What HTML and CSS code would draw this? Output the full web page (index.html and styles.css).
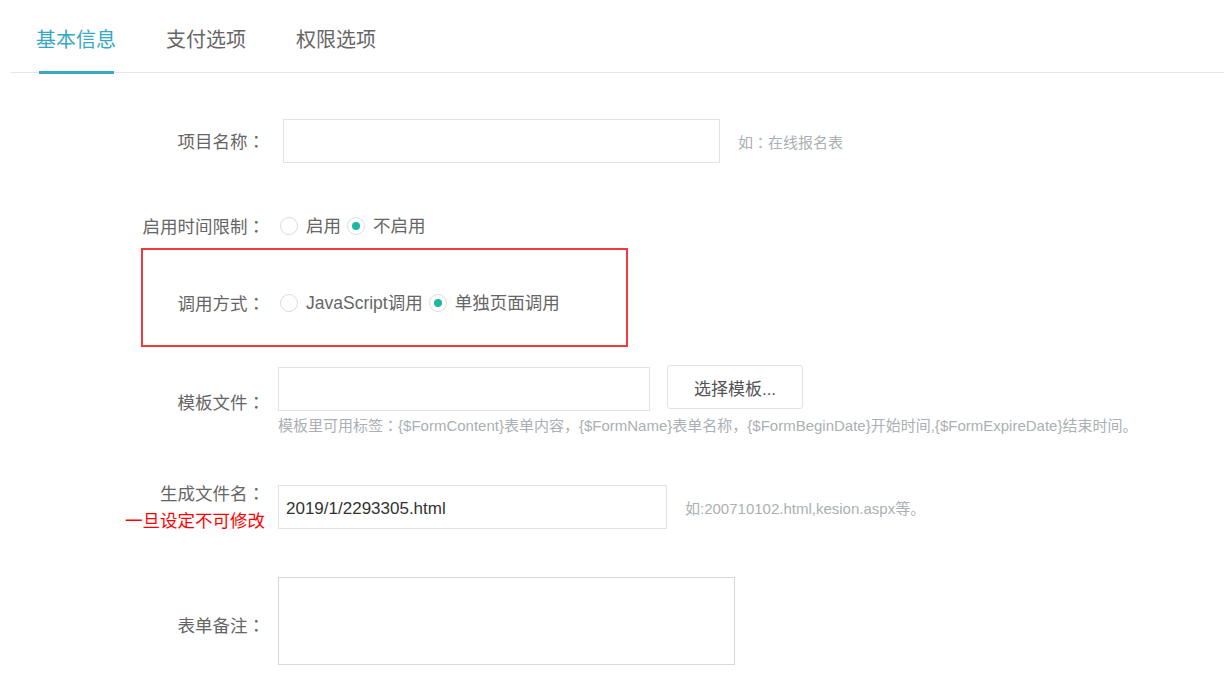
FILE: index.html
```html
<!DOCTYPE html>
<html lang="zh-CN">
<head>
<meta charset="utf-8">
<title>基本信息</title>
<link rel="stylesheet" href="styles.css">
</head>
<body>
<div class="tabs">
  <div class="tab active">基本信息</div>
  <div class="tab">支付选项</div>
  <div class="tab">权限选项</div>
</div>
<div class="form">
  <div class="row row-name">
    <div class="label">项目名称<span class="colon" lang="zh-TW">：</span></div>
    <input class="input input-name" type="text">
    <span class="hint">如<span class="colon" lang="zh-TW">：</span>在线报名表</span>
  </div>

  <div class="row row-time">
    <div class="label">启用时间限制<span class="colon" lang="zh-TW">：</span></div>
    <div class="radios">
      <span class="radio"></span><span class="rtext">启用</span>
      <span class="radio checked"></span><span class="rtext">不启用</span>
    </div>
  </div>

  <div class="highlight">
    <div class="row row-mode">
      <div class="label label-mode">调用方式<span class="colon" lang="zh-TW">：</span></div>
      <div class="radios">
        <span class="radio"></span><span class="rtext">JavaScript调用</span>
        <span class="radio checked"></span><span class="rtext">单独页面调用</span>
      </div>
    </div>
  </div>

  <div class="row row-tpl">
    <div class="label label-tpl">模板文件<span class="colon" lang="zh-TW">：</span></div>
    <div class="field">
      <div class="field-line">
        <input class="input input-tpl" type="text">
        <button class="btn" type="button">选择模板...</button>
      </div>
      <div class="tip">模板里可用标签<span class="colon" lang="zh-TW">：</span>{$FormContent}表单内容，{$FormName}表单名称，{$FormBeginDate}开始时间,{$FormExpireDate}结束时间。</div>
    </div>
  </div>

  <div class="row row-file">
    <div class="label label-file">生成文件名<span class="colon" lang="zh-TW">：</span><br><span class="warn">一旦设定不可修改</span></div>
    <input class="input input-file" type="text" value="2019/1/2293305.html">
    <span class="hint hint-file">如:200710102.html,kesion.aspx等。</span>
  </div>

  <div class="row row-note">
    <div class="label label-note">表单备注<span class="colon" lang="zh-TW">：</span></div>
    <textarea class="textarea"></textarea>
  </div>
</div>
</body>
</html>
```

FILE: styles.css
```css
* { box-sizing: border-box; }

body {
  margin: 0;
  background: #fff;
  font-family: "Liberation Sans", "Noto Sans CJK SC", sans-serif;
  color: #666;
}

.colon {
  font-family: "Noto Sans CJK TC", "Noto Sans CJK SC", sans-serif;
}

.tabs {
  margin-left: 11px;
  height: 73px;
  border-bottom: 1px solid #e1e7e7;
  display: flex;
  padding-left: 25px;
  gap: 50px;
}

.tab {
  position: relative;
  height: 72px;
  display: flex;
  align-items: center;
  padding-top: 4px;
  font-size: 20px;
  color: #666;
}

.tab.active { color: #38a8c2; }

.tab.active::after {
  content: "";
  position: absolute;
  left: 3px;
  right: 2px;
  bottom: -2px;
  height: 3px;
  background: #38a8c2;
}

.form {
  padding-top: 46px;
}

.row {
  display: flex;
  align-items: center;
}

.label {
  width: 265px;
  flex-shrink: 0;
  text-align: right;
  font-size: 17.5px;
  line-height: 27px;
  color: #666;
}

.input {
  height: 44px;
  border: 1px solid #dfe3e3;
  background: #fff;
  font-family: "Liberation Sans", "Noto Sans CJK SC", sans-serif;
  font-size: 17px;
  color: #333;
  padding: 0 7px 0 7px;
  outline: none;
}

.input-name {
  margin-left: 18px;
  width: 437px;
}

.hint {
  margin-left: 18px;
  font-size: 15px;
  color: #aab0b3;
}

.row-time {
  margin-top: 41px;
  height: 44px;
}

.radios {
  display: flex;
  align-items: center;
  margin-left: 15px;
  font-size: 17.5px;
  color: #666;
}

.radio {
  width: 18px;
  height: 18px;
  border: 1px solid #d9dede;
  border-radius: 50%;
  display: flex;
  align-items: center;
  justify-content: center;
  margin-left: 6px;
}

.radios .radio:first-child { margin-left: 0; }

.radio.checked::after {
  content: "";
  width: 8px;
  height: 8px;
  border-radius: 50%;
  background: #1db8a0;
}

.rtext {
  margin-left: 8px;
  margin-bottom: 4px;
}

.highlight {
  margin-left: 141px;
  width: 487px;
  height: 99px;
  border: 2px solid #f23a3a;
  padding-top: 31px;
}

.row-mode { height: 44px; }

.label-mode { width: 122px; }

.row-tpl {
  margin-top: 18px;
}

.label-tpl { padding-top: 4px; }

.field {
  margin-left: 13px;
  display: flex;
  flex-direction: column;
}

.field-line {
  display: flex;
  align-items: flex-start;
}

.input-tpl {
  margin-top: 2px;
  width: 372px;
}

.btn {
  margin-left: 17px;
  width: 136px;
  height: 44px;
  border: 1px solid #dfe3e3;
  border-radius: 3px;
  background: #fff;
  font-family: "Liberation Sans", "Noto Sans CJK SC", sans-serif;
  font-size: 17px;
  color: #555;
}

.tip {
  margin-top: 4px;
  font-size: 15px;
  line-height: 20px;
  color: #aab0b3;
  white-space: nowrap;
}

.row-file {
  margin-top: 43px;
}

.warn { color: #f00; }

.input-file {
  margin-left: 13px;
  width: 389px;
  padding-top: 3px;
}

.row-note {
  margin-top: 42px;
}

.label-note { padding-top: 8px; }

.textarea {
  margin-left: 13px;
  width: 457px;
  height: 88px;
  border: 1px solid #d6dada;
  resize: none;
  outline: none;
}
```
